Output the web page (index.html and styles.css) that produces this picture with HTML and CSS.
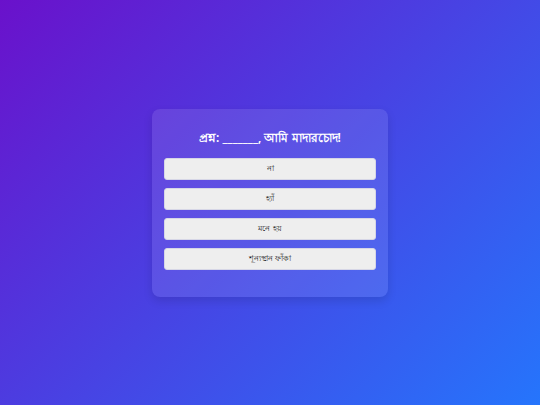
FILE: index.html
```html
<!DOCTYPE html>
<html lang="bn">
<head>
<meta charset="utf-8">
<link rel="stylesheet" href="styles.css">
</head>
<body>
<div class="page">
  <div class="card">
    <h2 class="question">প্রশ্ন: _______, আমি মাদারচোদ!</h2>
    <div class="options">
      <button class="option">না</button>
      <button class="option">হ্যাঁ</button>
      <button class="option">মনে হয়</button>
      <button class="option">শূন্যস্থান ফাঁকা</button>
    </div>
  </div>
</div>
</body>
</html>
```
FILE: styles.css
```css
html, body {
  margin: 0;
  padding: 0;
  height: 100%;
}
body {
  font-family: "Noto Sans", "DejaVu Sans", sans-serif;
  background: linear-gradient(135deg, #6a11cb 0%, #2575fc 100%);
}
.page {
  height: 405px;
  display: flex;
  align-items: center;
  justify-content: center;
}
.card {
  width: 236px;
  box-sizing: border-box;
  padding: 20px 12px 27px;
  background: rgba(255, 255, 255, 0.1);
  border-radius: 8px;
  box-shadow: 0 4px 10px rgba(0, 0, 0, 0.12);
}
.question {
  margin: 0 0 11px;
  color: #fff;
  font-size: 12px;
  line-height: 18px;
  font-weight: 600;
  text-align: center;
}
.options {
  display: flex;
  flex-direction: column;
  gap: 8px;
}
.option {
  height: 22px;
  background: #eeeeee;
  border: 1px solid #d6d6e6;
  border-radius: 3px;
  color: #222;
  font-family: inherit;
  font-size: 8px;
  padding: 0;
}
```
